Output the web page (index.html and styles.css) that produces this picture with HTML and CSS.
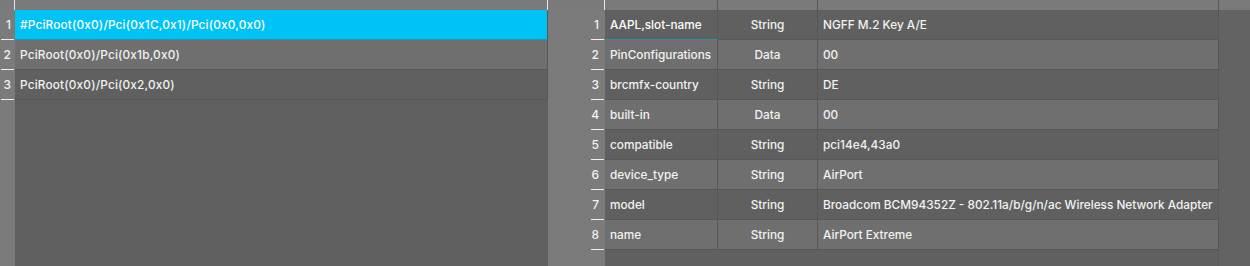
FILE: index.html
```html
<!DOCTYPE html>
<html lang="en">
<head>
    <meta charset="UTF-8">
    <meta name="viewport" content="width=device-width, initial-scale=1.0">
    <title>Devices Properties</title>
    <link rel="stylesheet" href="styles.css">
</head>
<body>
    <div class="pane left">
        <div class="header">
            <div class="num-head"></div>
            <div class="head-cell grow"></div>
        </div>
        <div class="row selected">
            <div class="num"><span>1</span></div>
            <div class="cell grow">#PciRoot(0x0)/Pci(0x1C,0x1)/Pci(0x0,0x0)</div>
        </div>
        <div class="row light">
            <div class="num"><span>2</span></div>
            <div class="cell grow">PciRoot(0x0)/Pci(0x1b,0x0)</div>
        </div>
        <div class="row dark">
            <div class="num"><span>3</span></div>
            <div class="cell grow">PciRoot(0x0)/Pci(0x2,0x0)</div>
        </div>
        <div class="fill"><div class="num-fill"></div></div>
    </div>

    <div class="pane right">
        <div class="header">
            <div class="num-head wide"></div>
            <div class="head-cell key"></div>
            <div class="head-cell type"></div>
            <div class="head-cell value"></div>
        </div>
        <div class="row dark">
            <div class="num wide"><span>1</span></div>
            <div class="cell key selected-cell">AAPL,slot-name</div>
            <div class="cell type">String</div>
            <div class="cell value">NGFF M.2 Key A/E</div>
        </div>
        <div class="row light">
            <div class="num wide"><span>2</span></div>
            <div class="cell key">PinConfigurations</div>
            <div class="cell type">Data</div>
            <div class="cell value">00</div>
        </div>
        <div class="row dark">
            <div class="num wide"><span>3</span></div>
            <div class="cell key">brcmfx-country</div>
            <div class="cell type">String</div>
            <div class="cell value">DE</div>
        </div>
        <div class="row light">
            <div class="num wide"><span>4</span></div>
            <div class="cell key">built-in</div>
            <div class="cell type">Data</div>
            <div class="cell value">00</div>
        </div>
        <div class="row dark">
            <div class="num wide"><span>5</span></div>
            <div class="cell key">compatible</div>
            <div class="cell type">String</div>
            <div class="cell value">pci14e4,43a0</div>
        </div>
        <div class="row light">
            <div class="num wide"><span>6</span></div>
            <div class="cell key">device_type</div>
            <div class="cell type">String</div>
            <div class="cell value">AirPort</div>
        </div>
        <div class="row dark">
            <div class="num wide"><span>7</span></div>
            <div class="cell key">model</div>
            <div class="cell type">String</div>
            <div class="cell value">Broadcom BCM94352Z - 802.11a/b/g/n/ac Wireless Network Adapter</div>
        </div>
        <div class="row light">
            <div class="num wide"><span>8</span></div>
            <div class="cell key">name</div>
            <div class="cell type">String</div>
            <div class="cell value">AirPort Extreme</div>
        </div>
        <div class="fill"><div class="num-fill wide"></div></div>
    </div>
</body>
</html>
```

FILE: styles.css
```css
body {
    margin: 0;
    display: flex;
    height: 266px;
    overflow: hidden;
    background-color: #606060;
    font-family: Inter, "Liberation Sans", Arial, sans-serif;
    font-size: 11.8px;
    font-weight: 500;
    color: #f2f2f2;
}

.pane {
    display: flex;
    flex-direction: column;
}

.pane.left {
    width: 548px;
}

.pane.right {
    flex: 1;
    background: linear-gradient(to right, transparent 670px, #575757 670px, #575757 671px, #636363 671px);
}

/* header strip, only the bottom of it is visible */
.header {
    display: flex;
    height: 10px;
    background-color: #7a7a7a;
}

.num-head {
    width: 14px;
    border-right: 1px solid #e8e8e8;
}

.num-head.wide {
    width: 56px;
}

.head-cell {
    height: 10px;
    border-right: 1px solid #e8e8e8;
    box-sizing: border-box;
}

.grow {
    flex: 1;
}

.row {
    display: flex;
    height: 30px;
}

.num {
    width: 15px;
    background-color: #7b7b7b;
    display: flex;
    justify-content: flex-end;
    flex-shrink: 0;
}

.num.wide {
    width: 57px;
}

.num span {
    width: 13px;
    box-sizing: border-box;
    padding-right: 3px;
    margin-right: 1px;
    text-align: right;
    line-height: 30px;
    font-size: 12px;
    border-bottom: 1px solid #f0f0f0;
}

.num.wide span {
    padding-right: 5px;
}

.cell {
    line-height: 30px;
    padding-left: 5px;
    border-bottom: 1px solid #575757;
    box-sizing: border-box;
    white-space: nowrap;
    overflow: hidden;
}

.key {
    width: 113px;
    border-right: 1px solid #575757;
}

.type {
    width: 100px;
    padding-left: 0;
    text-align: center;
    border-right: 1px solid #575757;
}

.value {
    width: 401px;
    border-right: 1px solid #575757;
}

.row.light .cell {
    background-color: #6f6f6f;
}

.row.dark .cell {
    background-color: #606060;
}

.row.selected .cell,
.cell.selected-cell {
    background-color: #00c3f5;
    border-bottom-color: #2a8fb0;
    color: #ffffff;
}

.pane.left .cell {
    border-right: 1px solid #575757;
    letter-spacing: 0.18px;
}

.fill {
    flex: 1;
    display: flex;
}

.num-fill {
    width: 15px;
    background-color: #7b7b7b;
}

.num-fill.wide {
    width: 57px;
}
```
